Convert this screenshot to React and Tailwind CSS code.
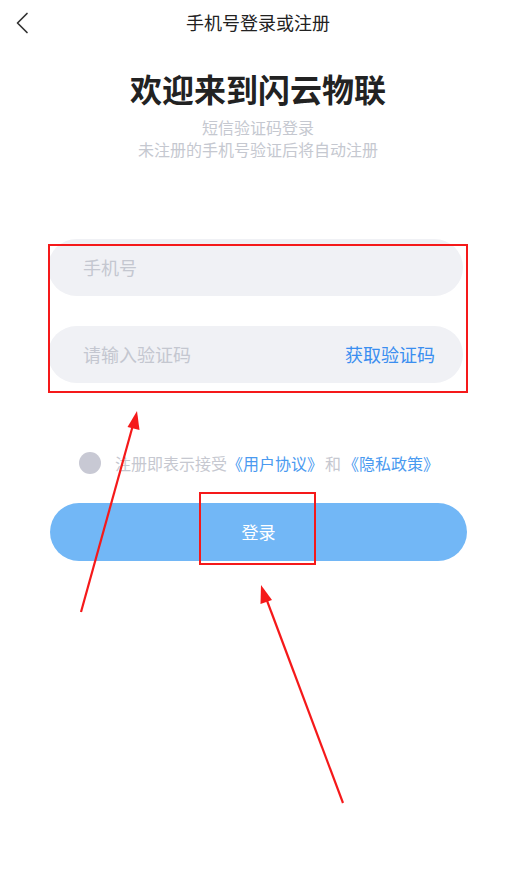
import React, { useState } from 'react';

const font = { fontFamily: '"Noto Sans CJK SC", "Noto Sans", sans-serif' };

// 红色标注：框 + 箭头
const Annotations = () => (
  <>
    <div className="absolute left-[48px] top-[244px] w-[420px] h-[149px] border-2 border-[#f5191a] pointer-events-none" />
    <div className="absolute left-[199px] top-[492px] w-[117px] h-[73px] border-2 border-[#f5191a] pointer-events-none" />
    <svg className="absolute left-0 top-0 pointer-events-none" width="516" height="895" viewBox="0 0 516 895">
      <line x1="81" y1="612" x2="133" y2="425" stroke="#f5191a" strokeWidth="2.2" />
      <polygon points="137,411 139.5,430 127.5,427" fill="#f5191a" />
      <line x1="343" y1="803" x2="266" y2="598" stroke="#f5191a" strokeWidth="2.2" />
      <polygon points="261,585 272,600 260.5,604" fill="#f5191a" />
    </svg>
  </>
);

const App = () => {
  const [phone, setPhone] = useState('');
  const [code, setCode] = useState('');
  const [agree, setAgree] = useState(false);

  return (
    <div className="relative w-full min-h-[895px] bg-white overflow-hidden" style={font}>
      {/* 顶部导航 */}
      <div className="relative h-[44px] flex items-center justify-center">
        <button className="absolute left-[12px] top-[10px] w-[20px] h-[26px] flex items-center justify-center">
          <svg width="14" height="22" viewBox="0 0 14 22">
            <polyline points="12,1.5 2.5,11 12,20.5" fill="none" stroke="#333" strokeWidth="1.7" strokeLinecap="round" strokeLinejoin="round" />
          </svg>
        </button>
        <span className="text-[18px] text-[#222] leading-none">手机号登录或注册</span>
      </div>

      {/* 欢迎语 */}
      <h1 className="mt-[24px] text-center text-[32px] leading-[40px] font-bold text-[#222]">欢迎来到闪云物联</h1>
      <div className="mt-[8px] text-center text-[16px] leading-[22px] text-[#c5c8d0]">
        <p>短信验证码登录</p>
        <p>未注册的手机号验证后将自动注册</p>
      </div>

      {/* 输入框 */}
      <div className="ml-[48px] w-[415px] mt-[79px] flex flex-col gap-[30px]">
        <div className="h-[57px] rounded-full bg-[#f0f1f5] flex items-center px-[35px]">
          <input
            value={phone}
            onChange={(e) => setPhone(e.target.value)}
            placeholder="手机号"
            className="w-full bg-transparent outline-none text-[18px] text-[#333] placeholder:text-[#c4c7d0]"
          />
        </div>
        <div className="h-[57px] rounded-full bg-[#f0f1f5] flex items-center pl-[35px] pr-[28px]">
          <input
            value={code}
            onChange={(e) => setCode(e.target.value)}
            placeholder="请输入验证码"
            className="flex-1 min-w-0 bg-transparent outline-none text-[18px] text-[#333] placeholder:text-[#c4c7d0]"
          />
          <span className="text-[18px] text-[#3a8ef0] whitespace-nowrap">获取验证码</span>
        </div>
      </div>

      {/* 协议 */}
      <div className="mt-[68px] ml-[79px] flex items-center h-[24px]">
        <button
          onClick={() => setAgree(!agree)}
          className={`w-[22px] h-[22px] rounded-full ${agree ? 'bg-[#72b7f6]' : 'bg-[#c8c9d4]'}`}
        />
        <p className="ml-[14px] text-[16px] text-[#c6c8d0] whitespace-nowrap">
          注册即表示接受<span className="text-[#4a9af0]">《用户协议》</span><span className="mx-[2px]">和</span><span className="text-[#4a9af0]">《隐私政策》</span>
        </p>
      </div>

      {/* 登录按钮 */}
      <button className="mt-[28px] ml-[50px] w-[417px] h-[58px] rounded-full bg-[#72b7f6] text-white text-[17px] flex items-center justify-center">
        登录
      </button>

      <Annotations />
    </div>
  );
};

export default App;
